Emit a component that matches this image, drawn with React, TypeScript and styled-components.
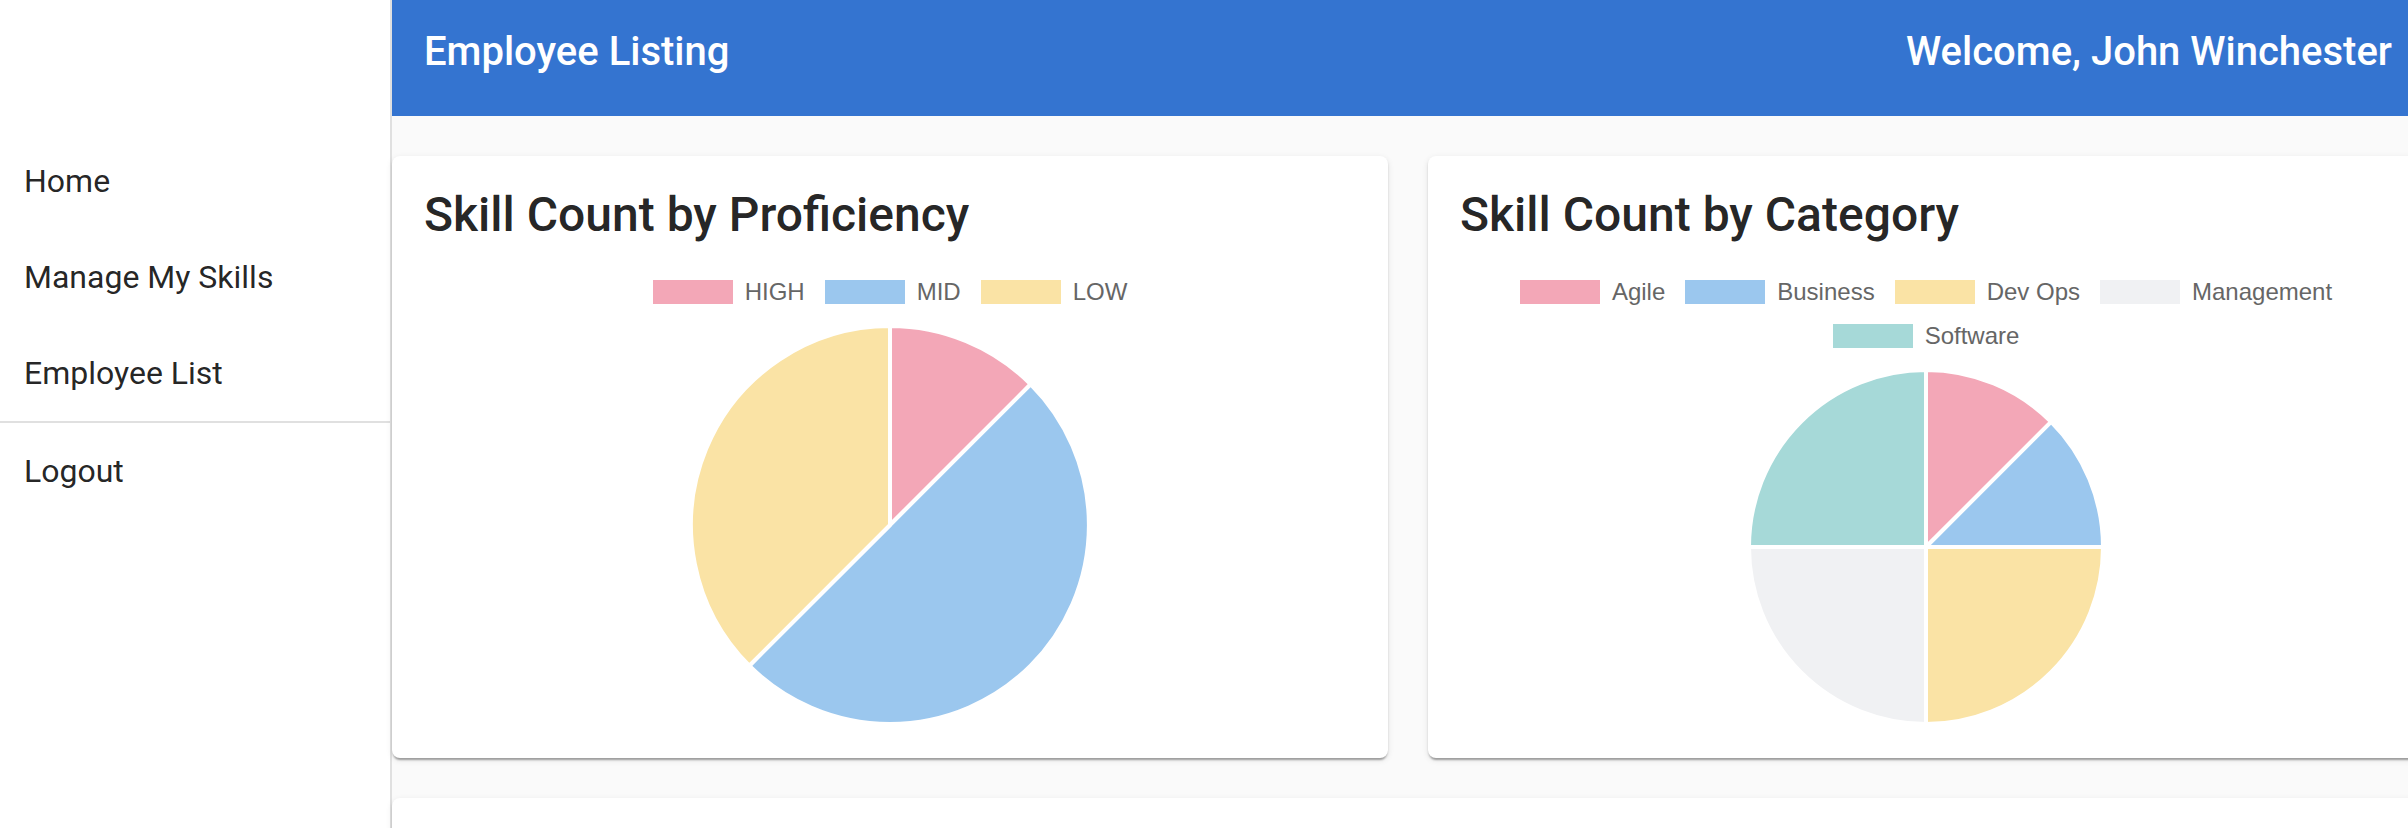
import React from 'react';
import styled, { createGlobalStyle } from 'styled-components';

const GlobalStyle = createGlobalStyle`
  html, body {
    margin: 0;
    padding: 0;
    overflow: hidden;
    background: #fafafa;
  }
  body {
    font-family: Roboto, "Noto Sans", "Liberation Sans", sans-serif;
  }
  *, *::before, *::after {
    box-sizing: border-box;
  }
`;

const Shell = styled.div`
  display: flex;
  width: 2424px;
  height: 828px;
  overflow: hidden;
`;

const Sidebar = styled.nav`
  flex: 0 0 392px;
  height: 100%;
  background: #ffffff;
  border-right: 2px solid #e0e0e0;
  display: flex;
  flex-direction: column;
`;

const SidebarSpacer = styled.div`
  height: 116px;
  flex-shrink: 0;
`;

const NavList = styled.ul`
  list-style: none;
  margin: 0;
  padding: 17px 0 0;
`;

const NavItem = styled.li`
  padding: 24px 23px 24px 24px;
  font-size: 32px;
  line-height: 48px;
  font-weight: 400;
  color: rgba(0, 0, 0, 0.87);
  cursor: pointer;
`;

const NavDivider = styled.li`
  height: 2px;
  background: #e0e0e0;
`;

const Main = styled.main`
  flex: 0 0 2032px;
  display: flex;
  flex-direction: column;
  background: #fafafa;
`;

const Header = styled.header`
  height: 116px;
  flex-shrink: 0;
  background: #3474d0;
  color: #ffffff;
  display: flex;
  justify-content: space-between;
  align-items: flex-start;
  padding: 28px 32px 0;
  font-size: 40px;
  font-weight: 500;
  line-height: 48px;
`;

const HeaderText = styled.span`
  white-space: nowrap;
`;

const Content = styled.div`
  display: grid;
  grid-template-columns: 996px 996px;
  gap: 40px;
  padding-top: 40px;
`;

const Card = styled.section<{ $wide?: boolean }>`
  background: #ffffff;
  border-radius: 8px;
  box-shadow: 0 4px 2px -2px rgba(0, 0, 0, 0.22), 0 2px 2px 0 rgba(0, 0, 0, 0.14),
    0 2px 6px 0 rgba(0, 0, 0, 0.1);
  padding: 30px 32px 34px;
  grid-column: ${(p) => (p.$wide ? '1 / -1' : 'auto')};
  min-height: ${(p) => (p.$wide ? '400px' : '0')};
`;

const CardTitle = styled.h2`
  margin: 0 0 36.4px;
  font-size: 48px;
  font-weight: 500;
  line-height: 57.6px;
  color: rgba(0, 0, 0, 0.87);
  white-space: nowrap;
`;

const Legend = styled.ul`
  list-style: none;
  margin: 0;
  padding: 0;
  display: flex;
  flex-wrap: wrap;
  justify-content: center;
  column-gap: 20px;
  row-gap: 20px;
`;

const LegendItem = styled.li`
  display: flex;
  align-items: center;
  gap: 12px;
  height: 24px;
  font-family: "Liberation Sans", Arial, Helvetica, sans-serif;
  font-size: 24px;
  line-height: 24px;
  color: #666666;
  white-space: nowrap;
`;

const Swatch = styled.span<{ $color: string }>`
  display: block;
  width: 80px;
  height: 24px;
  background: ${(p) => p.$color};
`;

const PieSvg = styled.svg<{ $size: number }>`
  display: block;
  margin: 21.7px auto 0;
  width: ${(p) => p.$size}px;
  height: ${(p) => p.$size}px;
`;

type Slice = { label: string; value: number; color: string };

const COLORS = {
  pink: '#f3a7b7',
  blue: '#9bc7ee',
  yellow: '#fae3a5',
  gray: '#f0f1f3',
  teal: '#a6d9d8',
};

const proficiency: Slice[] = [
  { label: 'HIGH', value: 1, color: COLORS.pink },
  { label: 'MID', value: 4, color: COLORS.blue },
  { label: 'LOW', value: 3, color: COLORS.yellow },
];

const category: Slice[] = [
  { label: 'Agile', value: 1, color: COLORS.pink },
  { label: 'Business', value: 1, color: COLORS.blue },
  { label: 'Dev Ops', value: 2, color: COLORS.yellow },
  { label: 'Management', value: 2, color: COLORS.gray },
  { label: 'Software', value: 2, color: COLORS.teal },
];

function point(c: number, r: number, deg: number): [number, number] {
  const rad = ((deg - 90) * Math.PI) / 180;
  return [c + r * Math.cos(rad), c + r * Math.sin(rad)];
}

function slicePath(c: number, r: number, a0: number, a1: number): string {
  const [x0, y0] = point(c, r, a0);
  const [x1, y1] = point(c, r, a1);
  const large = a1 - a0 > 180 ? 1 : 0;
  return `M ${c} ${c} L ${x0} ${y0} A ${r} ${r} 0 ${large} 1 ${x1} ${y1} Z`;
}

const Pie: React.FC<{ data: Slice[]; size: number }> = ({ data, size }) => {
  const total = data.reduce((s, d) => s + d.value, 0);
  const c = size / 2;
  const r = size / 2;
  let acc = 0;
  return (
    <PieSvg $size={size} viewBox={`0 0 ${size} ${size}`}>
      {data.map((d) => {
        const a0 = (acc / total) * 360;
        acc += d.value;
        const a1 = (acc / total) * 360;
        return (
          <path
            key={d.label}
            d={slicePath(c, r, a0, a1)}
            fill={d.color}
            stroke="#ffffff"
            strokeWidth={4}
            strokeLinejoin="bevel"
          />
        );
      })}
    </PieSvg>
  );
};

const ChartCard: React.FC<{ title: string; data: Slice[]; size: number }> = ({
  title,
  data,
  size,
}) => (
  <Card>
    <CardTitle>{title}</CardTitle>
    <Legend>
      {data.map((d) => (
        <LegendItem key={d.label}>
          <Swatch $color={d.color} />
          {d.label}
        </LegendItem>
      ))}
    </Legend>
    <Pie data={data} size={size} />
  </Card>
);

export default function App() {
  return (
    <>
      <GlobalStyle />
      <Shell>
        <Sidebar>
          <SidebarSpacer />
          <NavList>
            <NavItem>Home</NavItem>
            <NavItem>Manage My Skills</NavItem>
            <NavItem>Employee List</NavItem>
            <NavDivider />
            <NavItem>Logout</NavItem>
          </NavList>
        </Sidebar>
        <Main>
          <Header>
            <HeaderText>Employee Listing</HeaderText>
            <HeaderText>Welcome, John Winchester</HeaderText>
          </Header>
          <Content>
            <ChartCard title="Skill Count by Proficiency" data={proficiency} size={398} />
            <ChartCard title="Skill Count by Category" data={category} size={354} />
            <Card $wide />
          </Content>
        </Main>
      </Shell>
    </>
  );
}
